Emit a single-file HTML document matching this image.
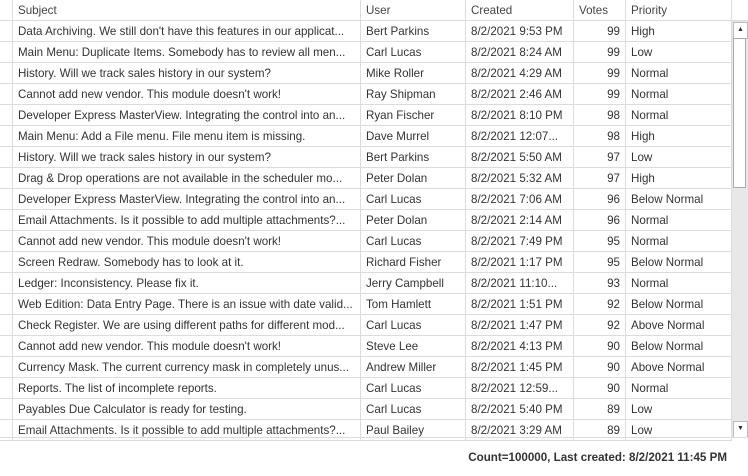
<!DOCTYPE html><html><head><style>
body{margin:0;width:748px;height:476px;background:#fff;font-family:"Liberation Sans",sans-serif;font-size:11.6px;color:#333;position:relative;overflow:hidden}
.r{position:absolute;left:0;width:732px;height:21px;border-bottom:1px solid #dcdcdc;box-sizing:border-box}
.c{position:absolute;top:0;height:20px;line-height:22px;white-space:nowrap;overflow:hidden;border-left:1px solid #dcdcdc;padding-left:5px;box-sizing:border-box}
.s{left:12px;width:348px}.u{left:360px;width:105px}.d{left:465px;width:108px}.v{left:573px;width:52px;text-align:right;padding-right:5px}.p{left:625px;width:107px;border-right:1px solid #dcdcdc}
.h{color:#444}
</style></head><body>
<div class="r h" style="top:0"><div class="c s">Subject</div><div class="c u">User</div><div class="c d">Created</div><div class="c v" style="text-align:left">Votes</div><div class="c p">Priority</div></div>
<div id="g"></div>
<div style="position:absolute;left:732px;top:0;width:16px;height:21px;border-bottom:1px solid #dcdcdc;box-sizing:border-box"></div>
<div style="position:absolute;left:732px;top:21px;width:16px;height:416px;background:#e8e8e8"></div>
<div style="position:absolute;left:733px;top:22px;width:13px;height:15px;background:#fff;border:1px solid #bbb;font-size:7px;text-align:center;line-height:14px;color:#333">▲</div>
<div style="position:absolute;left:733px;top:38px;width:13px;height:150px;background:#fff;border:1px solid #aaa;box-sizing:border-box"></div>
<div style="position:absolute;left:733px;top:421px;width:13px;height:15px;background:#fff;border:1px solid #bbb;font-size:7px;text-align:center;line-height:14px;color:#333">▼</div>
<div style="position:absolute;left:0;top:437px;width:748px;height:1px;background:#dcdcdc"></div>
<div style="position:absolute;right:21px;top:451px;font-weight:bold;color:#333;font-size:11.6px">Count=100000, Last created: 8/2/2021 11:45 PM</div>
<script>
var d=[["Data Archiving. We still don't have this features in our applicat...","Bert Parkins","8/2/2021 9:53 PM","99","High"],
["Main Menu: Duplicate Items. Somebody has to review all men...","Carl Lucas","8/2/2021 8:24 AM","99","Low"],
["History. Will we track sales history in our system?","Mike Roller","8/2/2021 4:29 AM","99","Normal"],
["Cannot add new vendor. This module doesn't work!","Ray Shipman","8/2/2021 2:46 AM","99","Normal"],
["Developer Express MasterView. Integrating the control into an...","Ryan Fischer","8/2/2021 8:10 PM","98","Normal"],
["Main Menu: Add a File menu. File menu item is missing.","Dave Murrel","8/2/2021 12:07...","98","High"],
["History. Will we track sales history in our system?","Bert Parkins","8/2/2021 5:50 AM","97","Low"],
["Drag & Drop operations are not available in the scheduler mo...","Peter Dolan","8/2/2021 5:32 AM","97","High"],
["Developer Express MasterView. Integrating the control into an...","Carl Lucas","8/2/2021 7:06 AM","96","Below Normal"],
["Email Attachments. Is it possible to add multiple attachments?...","Peter Dolan","8/2/2021 2:14 AM","96","Normal"],
["Cannot add new vendor. This module doesn't work!","Carl Lucas","8/2/2021 7:49 PM","95","Normal"],
["Screen Redraw. Somebody has to look at it.","Richard Fisher","8/2/2021 1:17 PM","95","Below Normal"],
["Ledger: Inconsistency. Please fix it.","Jerry Campbell","8/2/2021 11:10...","93","Normal"],
["Web Edition: Data Entry Page. There is an issue with date valid...","Tom Hamlett","8/2/2021 1:51 PM","92","Below Normal"],
["Check Register. We are using different paths for different mod...","Carl Lucas","8/2/2021 1:47 PM","92","Above Normal"],
["Cannot add new vendor. This module doesn't work!","Steve Lee","8/2/2021 4:13 PM","90","Below Normal"],
["Currency Mask. The current currency mask in completely unus...","Andrew Miller","8/2/2021 1:45 PM","90","Above Normal"],
["Reports. The list of incomplete reports.","Carl Lucas","8/2/2021 12:59...","90","Normal"],
["Payables Due Calculator is ready for testing.","Carl Lucas","8/2/2021 5:40 PM","89","Low"],
["Email Attachments. Is it possible to add multiple attachments?...","Paul Bailey","8/2/2021 3:29 AM","89","Low"]];
var h="";d.forEach(function(r,i){h+='<div class="r" style="top:'+(21+21*i)+'px"><div class="c s">'+r[0].replace(/&/g,"&amp;")+'</div><div class="c u">'+r[1]+'</div><div class="c d">'+r[2]+'</div><div class="c v">'+r[3]+'</div><div class="c p">'+r[4]+'</div></div>';});
document.getElementById("g").innerHTML=h;
</script>
</body></html>
